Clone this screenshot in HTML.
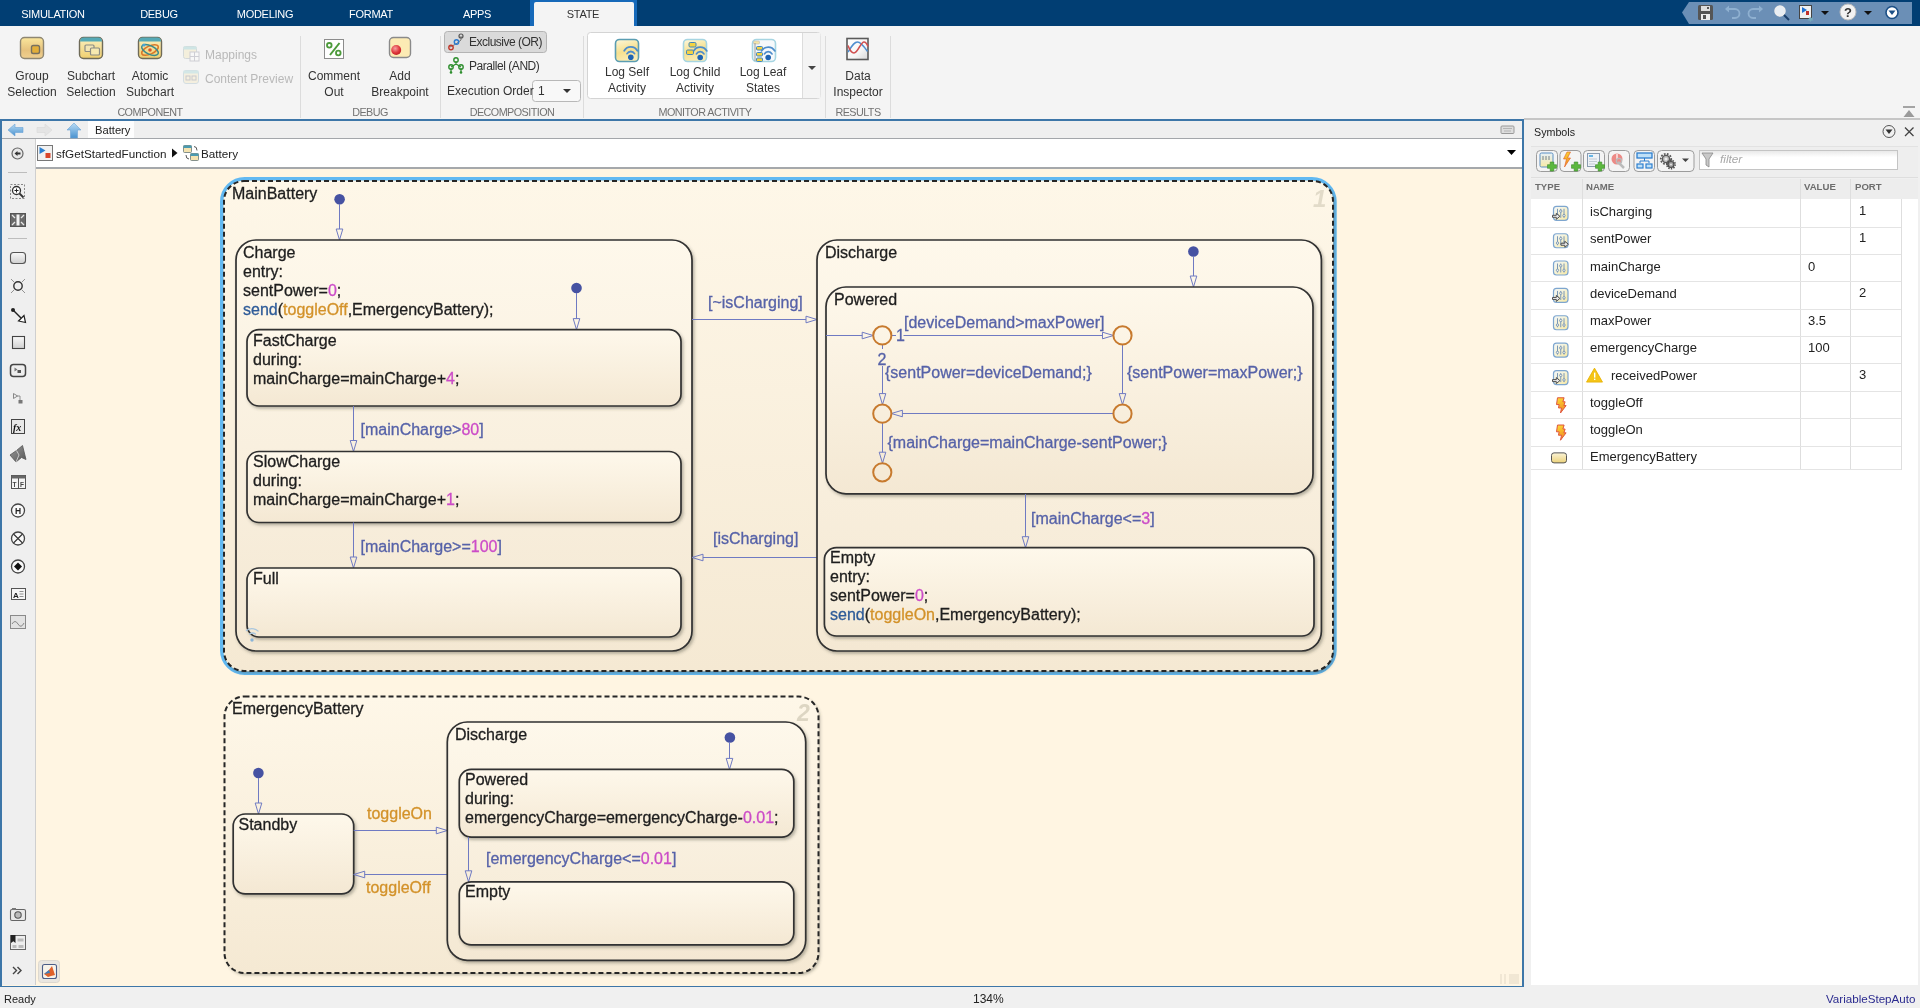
<!DOCTYPE html>
<html><head><meta charset="utf-8">
<style>
*{box-sizing:border-box;margin:0;padding:0}
html,body{width:1920px;height:1008px;overflow:hidden;background:#f0f0f0;font-family:"Liberation Sans",sans-serif;position:relative}
body{will-change:transform}
.a{position:absolute}
.t{position:absolute;white-space:nowrap;line-height:1}
#tabbar{left:0;top:0;width:1920px;height:26px;background:#013e73}
.tab{position:absolute;top:8px;color:#fff;font-size:11px;text-align:center;width:106px;letter-spacing:-0.3px}
#ribbon{left:0;top:26px;width:1920px;height:93px;background:#f4f4f4}
.rl{position:absolute;font-size:12px;color:#333;text-align:center;line-height:16px;white-space:nowrap}
.gl{position:absolute;top:106px;font-size:10.8px;color:#727272;text-align:center;white-space:nowrap;letter-spacing:-0.55px}
.sep{position:absolute;top:35px;width:1px;height:83px;background:#dcdcdc}
#frame{left:0;top:119px;width:1524px;height:869px;border:2px solid #3d76a8;background:#fff5e2}
#symp{left:1524px;top:118px;width:396px;height:869px;background:#f0f0f0;border-top:2px solid #c6c6c6}
#status{left:0;top:987px;width:1920px;height:21px;background:#f0f0f0}
</style></head><body>
<div id="tabbar" class="a">
  <div class="tab" style="left:0">SIMULATION</div>
  <div class="tab" style="left:106px">DEBUG</div>
  <div class="tab" style="left:212px">MODELING</div>
  <div class="tab" style="left:318px">FORMAT</div>
  <div class="tab" style="left:424px">APPS</div>
  <div class="a" style="left:530px;top:0px;width:107px;height:26px;background:#1669b9"></div>
  <div class="a" style="left:534px;top:2px;width:100px;height:25px;background:#f4f4f4;border-radius:2px 2px 0 0"></div>
  <div class="tab" style="left:530px;color:#333">STATE</div>
  <svg class="a" style="left:1670px;top:0" width="250" height="26" viewBox="1670 0 250 26">
    <path d="M1682 12.5 L1689 2 H1912 V24 H1689 Z" fill="#6b8fb6"/>
    <!-- save -->
    <rect x="1698" y="5" width="15" height="15" rx="1.5" fill="#555"/>
    <rect x="1701" y="6" width="9" height="5" fill="#ddd"/><rect x="1707" y="7" width="2" height="2" fill="#555"/>
    <rect x="1701" y="14" width="9" height="6" fill="#eee"/><rect x="1703" y="15" width="3" height="4" fill="#555"/>
    <!-- undo/redo -->
    <path d="M1727 9 h8 a4.5 4.5 0 0 1 0 9 h-3" fill="none" stroke="#8fb0d0" stroke-width="1.8"/><path d="M1725 9 l4 -3.5 v7 z" fill="#8fb0d0"/>
    <path d="M1761 9 h-8 a4.5 4.5 0 0 0 0 9 h3" fill="none" stroke="#8fb0d0" stroke-width="1.8"/><path d="M1763 9 l-4 -3.5 v7 z" fill="#8fb0d0"/>
    <!-- search -->
    <circle cx="1780" cy="11" r="5" fill="#e8eef4" stroke="#eee" stroke-width="1.5"/>
    <path d="M1784 15 l5 5" stroke="#1b3f6b" stroke-width="2"/>
    <!-- sim icon -->
    <rect x="1799.5" y="5.5" width="12" height="13" fill="#f0f0f0" stroke="#444"/>
    <path d="M1802 7 l5 3 l-5 3 z" fill="#1e6fd0"/><rect x="1806" y="11" width="3" height="4" fill="#c0302a"/>
    <path d="M1810 17 l1.5 1 1.5 -1 -0.5 2 1 1.5h-2l-1 1.5-1-1.5h-2l1-1.5z" fill="#7ab"/>
    <path d="M1821 11 h8 l-4 4 z" fill="#111"/>
    <!-- help -->
    <circle cx="1848" cy="12" r="8" fill="#f2f2f2" stroke="#bbb"/>
    <text x="1844" y="17" font-family="Liberation Sans" font-weight="bold" font-size="13" fill="#333">?</text>
    <path d="M1864 11 h8 l-4 4 z" fill="#111"/>
    <!-- minimize circle -->
    <circle cx="1892" cy="12.5" r="6" fill="#fff" stroke="#1b4f86" stroke-width="1.6"/>
    <path d="M1888.5 10.5 h7 l-3.5 4.5 z" fill="#1b4f86"/>
  </svg>
</div>
<div id="ribbon" class="a">
<svg class="a" style="left:0;top:0" width="1920" height="93" viewBox="0 26 1920 93">
<defs>
<linearGradient id="yg" x1="0" y1="0" x2="0" y2="1"><stop offset="0" stop-color="#fae69c"/><stop offset="0.6" stop-color="#e6c27e"/><stop offset="1" stop-color="#f0d090"/></linearGradient>
<linearGradient id="yg2" x1="0" y1="0" x2="0" y2="1"><stop offset="0" stop-color="#fbf0c0"/><stop offset="1" stop-color="#efcf6e"/></linearGradient>
<linearGradient id="lg" x1="0" y1="0" x2="0.3" y2="1"><stop offset="0" stop-color="#fdf8dc"/><stop offset="0.6" stop-color="#f6e08e"/><stop offset="1" stop-color="#f8ebb4"/></linearGradient>
</defs>
<!-- Group Selection -->
<rect x="20.5" y="37.5" width="23" height="21" rx="4" fill="url(#yg)" stroke="#8e8672" stroke-width="1.4"/>
<rect x="31.5" y="45.5" width="8" height="8" rx="1.8" fill="#e2ae3a" stroke="#777060" stroke-width="1.4"/>
<!-- Subchart Selection -->
<rect x="79.5" y="37.5" width="23" height="21" rx="4" fill="url(#yg2)" stroke="#6e6a58" stroke-width="1.4"/>
<path d="M80 41.5 Q80 37.5 84 37.5 L98 37.5 Q102 37.5 102 41.5 Z" fill="#55a9b5"/>
<rect x="85" y="45" width="9" height="6.5" rx="1" fill="#f3e6b4" stroke="#8c8c84" stroke-width="1.2"/>
<rect x="90.5" y="48" width="9" height="7" rx="1" fill="#f7e9b0" stroke="#8c8c84" stroke-width="1.2"/>
<!-- Atomic Subchart -->
<rect x="138.5" y="37.5" width="23" height="21" rx="4" fill="url(#yg2)" stroke="#6e6a58" stroke-width="1.4"/>
<path d="M139 41.5 Q139 37.5 143 37.5 L157 37.5 Q161 37.5 161 41.5 Z" fill="#55a9b5"/>
<ellipse cx="150" cy="50" rx="9" ry="4" fill="none" stroke="#d9782a" stroke-width="1.6" transform="rotate(-25 150 50)"/>
<ellipse cx="150" cy="50" rx="9" ry="4.2" fill="none" stroke="#3a8a8c" stroke-width="1.5" transform="rotate(25 150 50)"/>
<circle cx="150" cy="50" r="1.8" fill="#d9562a"/>
<circle cx="144" cy="45" r="1.6" fill="#4aa7d8"/>
<!-- Mappings (disabled) -->
<g opacity="0.35"><rect x="183.5" y="46.5" width="13" height="12" rx="2" fill="#f5e6b0" stroke="#9aa" /><rect x="183.5" y="46.5" width="13" height="3" fill="#8cc"/><rect x="190" y="52" width="9" height="9" fill="#fff" stroke="#889"/><path d="M194.5 52v9M190 56.5h9" stroke="#889"/></g>
<!-- Content preview (disabled) -->
<g opacity="0.3"><rect x="183.5" y="70.5" width="15" height="13" rx="2.5" fill="#f5e6b0" stroke="#8ab"/><rect x="183.5" y="70.5" width="15" height="3" fill="#8cc"/><rect x="186" y="76" width="4" height="4" fill="none" stroke="#667"/><rect x="192" y="76" width="4" height="4" fill="none" stroke="#667"/></g>
<!-- Comment Out -->
<rect x="324.5" y="39.5" width="19" height="19" fill="#fff" stroke="#8c8c8c" stroke-width="1"/>
<circle cx="329.3" cy="45.3" r="2.3" fill="none" stroke="#4c9a3a" stroke-width="1.8"/><circle cx="338.3" cy="53" r="2.3" fill="none" stroke="#4c9a3a" stroke-width="1.8"/><path d="M339.5 43 L330 55" stroke="#4c9a3a" stroke-width="2"/>
<!-- Add Breakpoint -->
<rect x="389.5" y="37.5" width="21" height="20" rx="4" fill="#fcebb4" stroke="#8a8a8a" stroke-width="1.4"/>
<defs><radialGradient id="rb" cx="0.4" cy="0.35" r="0.7"><stop offset="0" stop-color="#f7a0a0"/><stop offset="0.6" stop-color="#e03a3e"/><stop offset="1" stop-color="#c01c22"/></radialGradient></defs><circle cx="396.2" cy="50" r="5" fill="url(#rb)"/>
<!-- Exclusive OR button -->
<rect x="444.5" y="31.5" width="102" height="21" rx="3" fill="#dadada" stroke="#b4b4b4" stroke-width="1"/>
<path d="M450 47 L456 44 L461 40 L461 36" fill="none" stroke="#777" stroke-width="1"/>
<circle cx="451" cy="47.5" r="2.2" fill="none" stroke="#c0392b" stroke-width="1.4"/>
<circle cx="456.5" cy="42" r="2.2" fill="none" stroke="#2b7bd0" stroke-width="1.4"/>
<circle cx="461" cy="36" r="2" fill="none" stroke="#555" stroke-width="1.2"/>
<!-- Parallel AND -->
<path d="M456 61 V65 M451 67 L456 64 L461 67 M451 68 V72 M461 68 V72" fill="none" stroke="#2f8f2f" stroke-width="1.2"/>
<circle cx="456" cy="60" r="2.2" fill="none" stroke="#2f8f2f" stroke-width="1.4"/>
<circle cx="451" cy="67" r="2.2" fill="none" stroke="#2f8f2f" stroke-width="1.4"/>
<circle cx="461" cy="67" r="2.2" fill="none" stroke="#2f8f2f" stroke-width="1.4"/>
<circle cx="451" cy="72.5" r="1.3" fill="#2f8f2f"/><circle cx="461" cy="72.5" r="1.3" fill="#2f8f2f"/>
<!-- Exec order dropdown -->
<rect x="532.5" y="80.5" width="48" height="21" rx="3" fill="#f8f8f8" stroke="#b8b8b8" stroke-width="1"/>
<path d="M563 89 h8 l-4 4 z" fill="#333"/>
<!-- gallery -->
<rect x="587.5" y="32.5" width="233" height="66" rx="3" fill="#fff" stroke="#d4d4d4" stroke-width="1"/>
<rect x="802" y="33" width="18.5" height="65" fill="#f4f4f4"/>
<line x1="802.5" y1="33" x2="802.5" y2="98" stroke="#dcdcdc"/>
<path d="M808 66 h8 l-4 4 z" fill="#444"/>
<!-- Log Self -->
<rect x="615.5" y="39.5" width="23" height="22" rx="4" fill="url(#lg)" stroke="#5a9db2" stroke-width="1.6"/>
<path d="M624.22 50.70 A7.6 7.6 0 0 1 637.38 50.70 M627.08 53.65 A4.3 4.3 0 0 1 634.52 53.65" fill="none" stroke="#4d8ccb" stroke-width="1.8" stroke-linecap="round"/><circle cx="630.8" cy="57.3" r="2.8" fill="#1f64b3"/>
<!-- Log Child -->
<rect x="683.5" y="39.5" width="23" height="22" rx="4" fill="url(#lg)" stroke="#a6d5e2" stroke-width="1.6"/>
<rect x="689" y="42.5" width="7" height="4.5" rx="1.2" fill="#f4d342" stroke="#3f86c0" stroke-width="1"/>
<rect x="686.5" y="50" width="7" height="4.5" rx="1.2" fill="#f4d342" stroke="#3f86c0" stroke-width="1"/>
<path d="M693.62 50.90 A7.6 7.6 0 0 1 706.78 50.90 M696.48 53.85 A4.3 4.3 0 0 1 703.92 53.85" fill="none" stroke="#4d8ccb" stroke-width="1.8" stroke-linecap="round"/><circle cx="700.2" cy="57.5" r="2.8" fill="#1f64b3"/>
<!-- Log Leaf -->
<rect x="752.5" y="39.5" width="23" height="22" rx="4" fill="#f6f9fb" stroke="#a6d5e2" stroke-width="1.6"/>
<rect x="753.5" y="41" width="6" height="3" rx="1" fill="#f5e6a8" stroke="#bbb" stroke-width="0.6"/>
<path d="M755 43 V61" stroke="#999" stroke-width="1"/>
<rect x="756.5" y="46.5" width="6" height="3.5" rx="1" fill="#f4d342" stroke="#3f86c0" stroke-width="1"/>
<rect x="756.5" y="52.5" width="6" height="3.5" rx="1" fill="#f4d342" stroke="#3f86c0" stroke-width="1"/>
<rect x="756.5" y="58" width="6" height="3.5" rx="1" fill="#f4d342" stroke="#3f86c0" stroke-width="1"/>
<path d="M761.62 50.90 A7.6 7.6 0 0 1 774.78 50.90 M764.48 53.85 A4.3 4.3 0 0 1 771.92 53.85" fill="none" stroke="#4d8ccb" stroke-width="1.8" stroke-linecap="round"/><circle cx="768.2" cy="57.5" r="2.8" fill="#1f64b3"/>
<!-- Data inspector -->
<defs><linearGradient id="di" x1="0" y1="0" x2="1" y2="1"><stop offset="0" stop-color="#ffffff"/><stop offset="0.6" stop-color="#f6f6f6"/><stop offset="1" stop-color="#d8d8d8"/></linearGradient></defs>
<rect x="847" y="38.5" width="21" height="21" fill="url(#di)" stroke="#5a5a5a" stroke-width="1.6"/>
<path d="M848 52 C852 46 854 42 857.5 42 C861 42 864 46.5 867.5 51.5" fill="none" stroke="#4f8fd0" stroke-width="1.6"/>
<path d="M848 45.5 C850 51 851.5 53 854 53 C858 53 860.5 42 864 42 C866 42 867 44 868 46.5" fill="none" stroke="#d05050" stroke-width="1.6"/>
<!-- separators -->
<line x1="300.5" y1="36" x2="300.5" y2="118" stroke="#dcdcdc"/>
<line x1="440.5" y1="36" x2="440.5" y2="118" stroke="#dcdcdc"/>
<line x1="583.5" y1="36" x2="583.5" y2="118" stroke="#dcdcdc"/>
<line x1="825.5" y1="36" x2="825.5" y2="118" stroke="#dcdcdc"/>
<line x1="890.5" y1="36" x2="890.5" y2="118" stroke="#dcdcdc"/>
<!-- collapse arrow right -->
<path d="M1903 107 h12" stroke="#8a8a8a" stroke-width="1.5"/><path d="M1903.5 117 l5.5 -7 l5.5 7 z" fill="#9a9a9a"/>
</svg>
<div class="rl" style="left:2px;top:42px;width:60px">Group<br>Selection</div>
<div class="rl" style="left:61px;top:42px;width:60px">Subchart<br>Selection</div>
<div class="rl" style="left:120px;top:42px;width:60px">Atomic<br>Subchart</div>
<div class="t" style="left:205px;top:23px;font-size:12px;color:#b9b9b9">Mappings</div>
<div class="t" style="left:205px;top:47px;font-size:12px;color:#b9b9b9">Content Preview</div>
<div class="rl" style="left:304px;top:42px;width:60px">Comment<br>Out</div>
<div class="rl" style="left:365px;top:42px;width:70px">Add<br>Breakpoint</div>
<div class="t" style="left:469px;top:10px;font-size:12px;letter-spacing:-0.5px;color:#333">Exclusive (OR)</div>
<div class="t" style="left:469px;top:34px;font-size:12px;letter-spacing:-0.45px;color:#333">Parallel (AND)</div>
<div class="t" style="left:447px;top:59px;font-size:12px;color:#333">Execution Order</div>
<div class="t" style="left:538px;top:59px;font-size:12px;color:#333">1</div>
<div class="rl" style="left:597px;top:38px;width:60px">Log Self<br>Activity</div>
<div class="rl" style="left:665px;top:38px;width:60px">Log Child<br>Activity</div>
<div class="rl" style="left:733px;top:38px;width:60px">Log Leaf<br>States</div>
<div class="rl" style="left:827px;top:42px;width:62px">Data<br>Inspector</div>
<div class="gl" style="left:100px;top:80px;width:100px">COMPONENT</div>
<div class="gl" style="left:320px;top:80px;width:100px">DEBUG</div>
<div class="gl" style="left:452px;top:80px;width:120px">DECOMPOSITION</div>
<div class="gl" style="left:635px;top:80px;width:140px">MONITOR ACTIVITY</div>
<div class="gl" style="left:827px;top:80px;width:62px">RESULTS</div>
</div>
<div id="frame" class="a"></div>
<div class="a" style="left:2px;top:121px;width:1520px;height:17px;background:#efefef"></div>
<div class="a" style="left:2px;top:138px;width:1520px;height:1px;background:#a3a6aa"></div>
<div class="a" style="left:88px;top:121px;width:46px;height:17px;background:#fdfdfd"></div>
<div class="t" style="left:95px;top:125px;font-size:11.2px;color:#222">Battery</div>
<div class="a" style="left:2px;top:139px;width:33px;height:846px;background:#efefef"></div>
<div class="a" style="left:35px;top:139px;width:1px;height:846px;background:#cfcfcf"></div>
<div class="a" style="left:36px;top:139px;width:1486px;height:29px;background:#fff"></div>
<div class="a" style="left:36px;top:167px;width:1486px;height:2px;background:#a5a8ab"></div>
<div class="t" style="left:56px;top:148px;font-size:11.7px;color:#222">sfGetStartedFunction</div>
<div class="t" style="left:201px;top:148px;font-size:11.7px;color:#222">Battery</div>
<svg class="a" style="left:0;top:119px" width="1524" height="870" viewBox="0 119 1524 870">
<defs>
<linearGradient id="ba" x1="0" y1="0" x2="0" y2="1"><stop offset="0" stop-color="#b9dcf5"/><stop offset="1" stop-color="#4a92cf"/></linearGradient>
<linearGradient id="sg" x1="0" y1="0" x2="0" y2="1"><stop offset="0" stop-color="#fafafa"/><stop offset="1" stop-color="#cfcfcf"/></linearGradient>
</defs>
<!-- nav arrows -->
<path d="M8 130 L15 124 V127.5 H23 V132.5 H15 V136 Z" fill="url(#ba)" stroke="#6aa3d6" stroke-width="0.6"/>
<path d="M52 130 L45 124 V127.5 H37 V132.5 H45 V136 Z" fill="#e4e4e4" stroke="#d8d8d8" stroke-width="0.6"/>
<path d="M74 123 L81 130 H77.5 V138 H70.5 V130 H67 Z" fill="url(#ba)" stroke="#6aa3d6" stroke-width="0.6"/>
<!-- keyboard icon -->
<rect x="1501" y="126" width="13" height="7.5" rx="1" fill="#ddd" stroke="#999" stroke-width="1"/>
<path d="M1503 128.5 h9 M1504 131 h7" stroke="#aaa" stroke-width="0.8"/>
<!-- breadcrumb icons -->
<rect x="37.5" y="145.5" width="15" height="15" fill="#f1f1f1" stroke="#777" stroke-width="1"/>
<path d="M39.5 147 l6 3.5 l-6 3.5 z" fill="#2a7fd0"/>
<rect x="45.5" y="153" width="5" height="5" fill="#d9452b"/>
<path d="M172 148.5 l5.5 4.5 l-5.5 4.5 z" fill="#111"/>
<rect x="183.5" y="145.5" width="8" height="7" rx="1" fill="#f4e3b0" stroke="#677" stroke-width="0.8"/><rect x="183.5" y="145.5" width="8" height="2.5" fill="#4a9ab0"/>
<rect x="190.5" y="153.5" width="8" height="7" rx="1" fill="#f4e3b0" stroke="#677" stroke-width="0.8"/><rect x="190.5" y="153.5" width="8" height="2.5" fill="#4a9ab0"/>
<path d="M194 146.5 q3 0 3 4 M186 155 q0 4 3 4" fill="none" stroke="#444" stroke-width="0.9"/>
<path d="M1507 150 h9 l-4.5 5 z" fill="#000"/>
<!-- left toolbar -->
<circle cx="17.5" cy="153.5" r="5.5" fill="#e8e8e8" stroke="#666" stroke-width="1.2"/>
<path d="M14.5 153.5 l3 -2.5 v1.5 h3 v2 h-3 v1.5 z" fill="#333"/>
<line x1="8" y1="172.5" x2="27" y2="172.5" stroke="#bdbdbd"/>
<rect x="10.5" y="184.5" width="14" height="14" fill="none" stroke="#888" stroke-width="1" stroke-dasharray="2 1.5"/>
<circle cx="16.5" cy="190.5" r="4" fill="#fff" stroke="#333" stroke-width="1.3"/>
<path d="M14.5 190.5 h4 M16.5 188.5 v4" stroke="#222" stroke-width="1"/>
<path d="M19.5 193.5 l4 4" stroke="#333" stroke-width="1.8"/>
<rect x="10.5" y="213.5" width="15" height="13" fill="#6a6a6a" stroke="#555" stroke-width="1"/>
<rect x="16.5" y="214.5" width="3" height="11" fill="#f4f4f4"/>
<path d="M12 215 l3 3 M24 215 l-3 3 M12 225 l3 -3 M24 225 l-3 -3" stroke="#e8e8e8" stroke-width="1.3"/>
<line x1="8" y1="238.5" x2="27" y2="238.5" stroke="#bdbdbd"/>
<rect x="10.5" y="252.5" width="15" height="11" rx="3" fill="url(#sg)" stroke="#555" stroke-width="1.1"/>
<circle cx="18" cy="286" r="4.2" fill="none" stroke="#333" stroke-width="1.4"/>
<path d="M11 279 l3 3 M25 279 l-3 3 M11 293 l3 -3 M25 293 l-3 -3" stroke="#888" stroke-width="0.9"/>
<circle cx="13" cy="310" r="2" fill="#222"/>
<path d="M13 310 l8 8" stroke="#222" stroke-width="1.5"/>
<path d="M25.5 322.5 l-7 -1.5 l5.5 -5.5 z" fill="#fff" stroke="#222" stroke-width="1.2"/>
<rect x="12.5" y="336.5" width="12" height="12" fill="url(#sg)" stroke="#444" stroke-width="1.1"/>
<rect x="10.5" y="364.5" width="15" height="12" rx="3" fill="#eee" stroke="#444" stroke-width="1.5"/>
<path d="M14.5 367.5 l3 2 l-3 2 z" fill="#777"/><rect x="17.5" y="370" width="3.5" height="3" fill="#555"/>
<path d="M13.5 393.5 l4 2.5 l-4 2.5 z" fill="none" stroke="#888" stroke-width="1"/>
<path d="M17 396 h3 v4" fill="none" stroke="#888" stroke-width="0.9"/><rect x="18.5" y="400" width="4" height="3.5" fill="#777"/>
<rect x="11.5" y="419.5" width="13" height="14" fill="#e8e8e8" stroke="#444" stroke-width="1"/>
<text x="13" y="431" font-family="Liberation Serif" font-style="italic" font-weight="bold" font-size="10" fill="#111">fx</text>
<defs><linearGradient id="ml" x1="0" y1="0" x2="1" y2="1"><stop offset="0" stop-color="#9a9a9a"/><stop offset="1" stop-color="#555"/></linearGradient></defs><path d="M10 455 L16.5 450.5 L22.5 445.5 L26 459.5 L21.5 457.5 L16 462 Z" fill="url(#ml)" stroke="#555" stroke-width="0.8" stroke-linejoin="round"/><path d="M16.5 450.5 L19 455 L16 462" fill="none" stroke="#ddd" stroke-width="0.8"/>
<rect x="11.5" y="475.5" width="14" height="13" fill="#f4f4f4" stroke="#555" stroke-width="1"/>
<rect x="11.5" y="475.5" width="14" height="3" fill="#666"/>
<line x1="18.5" y1="478" x2="18.5" y2="488.5" stroke="#555"/>
<text x="12.6" y="486.5" font-family="Liberation Sans" font-size="6.5" font-weight="bold" fill="#444">T</text><text x="20" y="486.5" font-family="Liberation Sans" font-size="6.5" font-weight="bold" fill="#444">F</text>
<circle cx="18" cy="510.5" r="6.5" fill="#fafafa" stroke="#444" stroke-width="1.3"/>
<text x="15" y="514" font-family="Liberation Sans" font-weight="bold" font-size="8.5" fill="#222">H</text>
<circle cx="18" cy="538.5" r="6.5" fill="#fafafa" stroke="#444" stroke-width="1.3"/>
<path d="M13.5 534 l9 9 M22.5 534 l-9 9" stroke="#333" stroke-width="1.1"/>
<circle cx="18" cy="566.5" r="6.5" fill="#fafafa" stroke="#444" stroke-width="1.3"/>
<path d="M18 562.5 l4 4 l-4 4 l-4 -4 z" fill="#111"/>
<rect x="11.5" y="588.5" width="14" height="11" fill="#f6f6f6" stroke="#555" stroke-width="1"/>
<text x="13" y="597.5" font-family="Liberation Sans" font-weight="bold" font-size="8" fill="#222">A</text>
<path d="M19.5 591.5 h4 M19.5 594 h4 M19.5 596.5 h4" stroke="#777" stroke-width="0.8"/>
<rect x="10.5" y="615.5" width="15" height="13" fill="#e2e2e2" stroke="#8a8a8a" stroke-width="1"/>
<path d="M12 624 q3 -5 6 0 t6 -1" fill="none" stroke="#888" stroke-width="1"/>
<!-- bottom icons -->
<rect x="10.5" y="909.5" width="15" height="11" rx="1.5" fill="#e9e9e9" stroke="#666" stroke-width="1.1"/>
<rect x="12" y="908" width="4" height="2" fill="#777"/>
<circle cx="18" cy="915" r="3.2" fill="#bbb" stroke="#555" stroke-width="1.1"/>
<rect x="10.5" y="935.5" width="15" height="14" fill="#eee" stroke="#666" stroke-width="1"/>
<path d="M11 935 h4.5 v8 l-2.2 -1.8 l-2.3 1.8 z" fill="#222"/>
<rect x="17.5" y="938.5" width="6" height="3" fill="#bbb"/><rect x="12.5" y="945" width="4" height="3" fill="#bbb"/><rect x="18.5" y="945" width="5" height="3" fill="#bbb"/>
<path d="M13 967 l3.5 3.5 l-3.5 3.5 M17.5 967 l3.5 3.5 l-3.5 3.5" fill="none" stroke="#444" stroke-width="1.4"/>
<!-- matlab icon button on canvas -->
<rect x="38.5" y="960.5" width="21" height="22" rx="3" fill="#e9e6e0" stroke="#dcd8d0"/>
<rect x="42.5" y="964.5" width="14" height="14" rx="2" fill="#f7f3ea" stroke="#4b5d87" stroke-width="1.1"/>
<path d="M44 974 L49 970 L52 966 L55 975 L51 976 L48 977 Z" fill="#e0622a"/>
<path d="M44 974 L49 970 L50 973 Z" fill="#3a7fc0"/>
<!-- bottom-right grip -->
<rect x="1500" y="974" width="2" height="10" fill="#f1e7d4"/><rect x="1504" y="974" width="2" height="10" fill="#f1e7d4"/><rect x="1509" y="974" width="10" height="10" fill="#f1e7d4"/>
</svg>
<svg class="a" style="left:0;top:0" width="1920" height="1008" viewBox="0 0 1920 1008">
<defs>
<linearGradient id="g" x1="0" y1="0" x2="0" y2="1"><stop offset="0" stop-color="#fef8eb"/><stop offset="1" stop-color="#f4e8d3"/></linearGradient>
<linearGradient id="gp" x1="0" y1="0" x2="0" y2="1"><stop offset="0" stop-color="#fef7e8"/><stop offset="1" stop-color="#f5e9d3"/></linearGradient>
<filter id="sh" x="-5%" y="-5%" width="110%" height="115%"><feDropShadow dx="1.6" dy="2" stdDeviation="1.7" flood-color="#4a4438" flood-opacity="0.38"/></filter>
<clipPath id="cc"><rect x="36" y="169" width="1486" height="816"/></clipPath>
</defs>
<g clip-path="url(#cc)" font-family="Liberation Sans, sans-serif" font-size="16" stroke-width="0.3">
<rect x="221.7" y="178.7" width="1113.3" height="494.6" rx="23" fill="none" stroke="#62b9f2" stroke-width="3.4"/>
<rect x="224" y="181" width="1109" height="490" rx="20" fill="url(#gp)" filter="url(#sh)" stroke="none"/>
<rect x="224" y="181" width="1109" height="490" rx="20" fill="none" stroke="#262626" stroke-width="2" stroke-dasharray="5 3"/>
<text x="232" y="199" fill="#1e1e1e" stroke="#1e1e1e" font-size="16">MainBattery</text>
<text x="1313" y="207" fill="#e2dbc9" font-size="24" font-weight="bold" font-style="italic">1</text>
<circle cx="339.6" cy="199.3" r="5.3" fill="#4652a2"/>
<line x1="339.5" y1="204" x2="339.5" y2="229" stroke="#6f7ac2" stroke-width="1"/>
<polygon points="339.5,240.0 336.2,229.0 342.8,229.0" fill="none" stroke="#6f7ac2" stroke-width="1" stroke-linejoin="miter"/>
<rect x="236" y="240" width="456" height="411" rx="20" fill="url(#g)" filter="url(#sh)" stroke="#303030" stroke-width="1.7"/>
<text x="243" y="258" fill="#1e1e1e" stroke="#1e1e1e" font-size="16">Charge</text>
<text x="243" y="277" fill="#1e1e1e" stroke="#1e1e1e" font-size="16">entry:</text>
<text x="243" y="296" font-size="16"><tspan fill="#1e1e1e" stroke="#1e1e1e">sentPower=</tspan><tspan fill="#cc4cc8" stroke="#cc4cc8">0</tspan><tspan fill="#1e1e1e" stroke="#1e1e1e">;</tspan></text>
<text x="243" y="315" font-size="16"><tspan fill="#2e5b98" stroke="#2e5b98">send</tspan><tspan fill="#1e1e1e" stroke="#1e1e1e">(</tspan><tspan fill="#d3922a" stroke="#d3922a">toggleOff</tspan><tspan fill="#1e1e1e" stroke="#1e1e1e">,EmergencyBattery);</tspan></text>
<circle cx="576.5" cy="288" r="5.3" fill="#4652a2"/>
<line x1="576.5" y1="293" x2="576.5" y2="318.6" stroke="#6f7ac2" stroke-width="1"/>
<polygon points="576.5,329.6 573.2,318.6 579.8,318.6" fill="none" stroke="#6f7ac2" stroke-width="1" stroke-linejoin="miter"/>
<rect x="247" y="329.6" width="434" height="76.39999999999998" rx="12" fill="url(#g)" filter="url(#sh)" stroke="#303030" stroke-width="1.7"/>
<text x="253" y="346" fill="#1e1e1e" stroke="#1e1e1e" font-size="16">FastCharge</text>
<text x="253" y="365" fill="#1e1e1e" stroke="#1e1e1e" font-size="16">during:</text>
<text x="253" y="384" font-size="16"><tspan fill="#1e1e1e" stroke="#1e1e1e">mainCharge=mainCharge+</tspan><tspan fill="#cc4cc8" stroke="#cc4cc8">4</tspan><tspan fill="#1e1e1e" stroke="#1e1e1e">;</tspan></text>
<line x1="353.5" y1="406" x2="353.5" y2="440.5" stroke="#6f7ac2" stroke-width="1"/>
<polygon points="353.5,451.5 350.2,440.5 356.8,440.5" fill="none" stroke="#6f7ac2" stroke-width="1" stroke-linejoin="miter"/>
<text x="360.5" y="435" font-size="16"><tspan fill="#5662a8" stroke="#5662a8">[mainCharge&gt;</tspan><tspan fill="#cc4cc8" stroke="#cc4cc8">80</tspan><tspan fill="#5662a8" stroke="#5662a8">]</tspan></text>
<rect x="247" y="451.5" width="434" height="71.0" rx="12" fill="url(#g)" filter="url(#sh)" stroke="#303030" stroke-width="1.7"/>
<text x="253" y="467" fill="#1e1e1e" stroke="#1e1e1e" font-size="16">SlowCharge</text>
<text x="253" y="486" fill="#1e1e1e" stroke="#1e1e1e" font-size="16">during:</text>
<text x="253" y="505" font-size="16"><tspan fill="#1e1e1e" stroke="#1e1e1e">mainCharge=mainCharge+</tspan><tspan fill="#cc4cc8" stroke="#cc4cc8">1</tspan><tspan fill="#1e1e1e" stroke="#1e1e1e">;</tspan></text>
<line x1="353.5" y1="522.5" x2="353.5" y2="557" stroke="#6f7ac2" stroke-width="1"/>
<polygon points="353.5,568.0 350.2,557.0 356.8,557.0" fill="none" stroke="#6f7ac2" stroke-width="1" stroke-linejoin="miter"/>
<text x="360.5" y="552" font-size="16"><tspan fill="#5662a8" stroke="#5662a8">[mainCharge&gt;=</tspan><tspan fill="#cc4cc8" stroke="#cc4cc8">100</tspan><tspan fill="#5662a8" stroke="#5662a8">]</tspan></text>
<rect x="247" y="568" width="434" height="69" rx="12" fill="url(#g)" filter="url(#sh)" stroke="#303030" stroke-width="1.7"/>
<text x="253" y="584" fill="#1e1e1e" stroke="#1e1e1e" font-size="16">Full</text>
<path d="M246.5 630.5 Q252 626.5 258 631 M249.5 634 Q252.5 632 255.5 634" fill="none" stroke="#a9c6de" stroke-width="1.3" stroke-linecap="round"/><circle cx="252" cy="640" r="1.7" fill="#8ab4d8"/>
<line x1="692" y1="319.5" x2="806" y2="319.5" stroke="#6f7ac2" stroke-width="1"/>
<polygon points="817.0,319.5 806.0,316.2 806.0,322.8" fill="none" stroke="#6f7ac2" stroke-width="1" stroke-linejoin="miter"/>
<text x="708" y="308" fill="#5662a8" stroke="#5662a8" font-size="16">[~isCharging]</text>
<line x1="817" y1="557.5" x2="703" y2="557.5" stroke="#6f7ac2" stroke-width="1"/>
<polygon points="692.0,557.5 703.0,554.2 703.0,560.8" fill="none" stroke="#6f7ac2" stroke-width="1" stroke-linejoin="miter"/>
<text x="713" y="544" fill="#5662a8" stroke="#5662a8" font-size="16">[isCharging]</text>
<rect x="817" y="240" width="504.4000000000001" height="411" rx="20" fill="url(#g)" filter="url(#sh)" stroke="#303030" stroke-width="1.7"/>
<text x="825" y="258" fill="#1e1e1e" stroke="#1e1e1e" font-size="16">Discharge</text>
<circle cx="1193.4" cy="251.5" r="5.3" fill="#4652a2"/>
<line x1="1193.5" y1="256" x2="1193.5" y2="276" stroke="#6f7ac2" stroke-width="1"/>
<polygon points="1193.5,287.0 1190.2,276.0 1196.8,276.0" fill="none" stroke="#6f7ac2" stroke-width="1" stroke-linejoin="miter"/>
<rect x="826" y="287" width="487" height="206.8" rx="20" fill="url(#g)" filter="url(#sh)" stroke="#303030" stroke-width="1.7"/>
<text x="834" y="305" fill="#1e1e1e" stroke="#1e1e1e" font-size="16">Powered</text>
<line x1="826" y1="335.5" x2="862.2" y2="335.5" stroke="#6f7ac2" stroke-width="1"/>
<polygon points="873.2,335.5 862.2,332.2 862.2,338.8" fill="none" stroke="#6f7ac2" stroke-width="1" stroke-linejoin="miter"/>
<line x1="903.5" y1="335.5" x2="1102.5" y2="335.5" stroke="#6f7ac2" stroke-width="1"/>
<polygon points="1113.5,335.5 1102.5,332.2 1102.5,338.8" fill="none" stroke="#6f7ac2" stroke-width="1" stroke-linejoin="miter"/>
<line x1="891.5" y1="335.5" x2="896" y2="335.5" stroke="#6f7ac2" stroke-width="1"/>
<line x1="1122.5" y1="344.5" x2="1122.5" y2="393.6" stroke="#6f7ac2" stroke-width="1"/>
<polygon points="1122.5,404.6 1119.2,393.6 1125.8,393.6" fill="none" stroke="#6f7ac2" stroke-width="1" stroke-linejoin="miter"/>
<line x1="1113.4" y1="413.5" x2="902.4" y2="413.5" stroke="#6f7ac2" stroke-width="1"/>
<polygon points="891.4,413.5 902.4,410.2 902.4,416.8" fill="none" stroke="#6f7ac2" stroke-width="1" stroke-linejoin="miter"/>
<line x1="882.5" y1="344" x2="882.5" y2="349" stroke="#6f7ac2" stroke-width="1"/>
<line x1="882.5" y1="366" x2="882.5" y2="393.6" stroke="#6f7ac2" stroke-width="1"/>
<polygon points="882.5,404.6 879.2,393.6 885.8,393.6" fill="none" stroke="#6f7ac2" stroke-width="1" stroke-linejoin="miter"/>
<line x1="882.5" y1="422.8" x2="882.5" y2="452.2" stroke="#6f7ac2" stroke-width="1"/>
<polygon points="882.5,463.2 879.2,452.2 885.8,452.2" fill="none" stroke="#6f7ac2" stroke-width="1" stroke-linejoin="miter"/>
<circle cx="882.3" cy="335.4" r="9.1" fill="none" stroke="#c77a2e" stroke-width="2"/>
<circle cx="1122.5" cy="335.4" r="9.1" fill="none" stroke="#c77a2e" stroke-width="2"/>
<circle cx="882.3" cy="413.7" r="9.1" fill="none" stroke="#c77a2e" stroke-width="2"/>
<circle cx="1122.5" cy="413.7" r="9.1" fill="none" stroke="#c77a2e" stroke-width="2"/>
<circle cx="882.3" cy="472.3" r="9.1" fill="none" stroke="#c77a2e" stroke-width="2"/>
<text x="896" y="341" fill="#5662a8" stroke="#5662a8" font-size="16">1</text>
<text x="877.5" y="364.5" fill="#5662a8" stroke="#5662a8" font-size="16">2</text>
<text x="904" y="328" fill="#5662a8" stroke="#5662a8" font-size="16">[deviceDemand&gt;maxPower]</text>
<text x="885" y="378" fill="#5662a8" stroke="#5662a8" font-size="16">{sentPower=deviceDemand;}</text>
<text x="1127" y="378" fill="#5662a8" stroke="#5662a8" font-size="16">{sentPower=maxPower;}</text>
<text x="887.5" y="448" fill="#5662a8" stroke="#5662a8" font-size="16">{mainCharge=mainCharge-sentPower;}</text>
<line x1="1025.5" y1="494" x2="1025.5" y2="536.7" stroke="#6f7ac2" stroke-width="1"/>
<polygon points="1025.5,547.7 1022.2,536.7 1028.8,536.7" fill="none" stroke="#6f7ac2" stroke-width="1" stroke-linejoin="miter"/>
<text x="1031" y="524" font-size="16"><tspan fill="#5662a8" stroke="#5662a8">[mainCharge&lt;=</tspan><tspan fill="#cc4cc8" stroke="#cc4cc8">3</tspan><tspan fill="#5662a8" stroke="#5662a8">]</tspan></text>
<rect x="824.4" y="547.7" width="489.6" height="88.29999999999995" rx="12" fill="url(#g)" filter="url(#sh)" stroke="#303030" stroke-width="1.7"/>
<text x="830" y="563" fill="#1e1e1e" stroke="#1e1e1e" font-size="16">Empty</text>
<text x="830" y="582" fill="#1e1e1e" stroke="#1e1e1e" font-size="16">entry:</text>
<text x="830" y="601" font-size="16"><tspan fill="#1e1e1e" stroke="#1e1e1e">sentPower=</tspan><tspan fill="#cc4cc8" stroke="#cc4cc8">0</tspan><tspan fill="#1e1e1e" stroke="#1e1e1e">;</tspan></text>
<text x="830" y="620" font-size="16"><tspan fill="#2e5b98" stroke="#2e5b98">send</tspan><tspan fill="#1e1e1e" stroke="#1e1e1e">(</tspan><tspan fill="#d3922a" stroke="#d3922a">toggleOn</tspan><tspan fill="#1e1e1e" stroke="#1e1e1e">,EmergencyBattery);</tspan></text>
<rect x="224.5" y="696.5" width="594.0" height="276.5" rx="20" fill="url(#gp)" filter="url(#sh)" stroke="none"/>
<rect x="224.5" y="696.5" width="594.0" height="276.5" rx="20" fill="none" stroke="#262626" stroke-width="2" stroke-dasharray="5 3"/>
<text x="232" y="714" fill="#1e1e1e" stroke="#1e1e1e" font-size="16">EmergencyBattery</text>
<text x="797" y="721" fill="#ddd6c3" font-size="23" font-weight="bold" font-style="italic">2</text>
<circle cx="258.4" cy="773" r="5.3" fill="#4652a2"/>
<line x1="258.5" y1="778" x2="258.5" y2="803" stroke="#6f7ac2" stroke-width="1"/>
<polygon points="258.5,814.0 255.2,803.0 261.8,803.0" fill="none" stroke="#6f7ac2" stroke-width="1" stroke-linejoin="miter"/>
<rect x="233.2" y="814" width="120.5" height="79.79999999999995" rx="12" fill="url(#g)" filter="url(#sh)" stroke="#303030" stroke-width="1.7"/>
<text x="238.5" y="830" fill="#1e1e1e" stroke="#1e1e1e" font-size="16">Standby</text>
<line x1="353.7" y1="830.5" x2="436.3" y2="830.5" stroke="#6f7ac2" stroke-width="1"/>
<polygon points="447.3,830.5 436.3,827.2 436.3,833.8" fill="none" stroke="#6f7ac2" stroke-width="1" stroke-linejoin="miter"/>
<text x="367" y="819" fill="#d3922a" stroke="#d3922a" font-size="16">toggleOn</text>
<line x1="447.3" y1="874.5" x2="364.7" y2="874.5" stroke="#6f7ac2" stroke-width="1"/>
<polygon points="353.7,874.5 364.7,871.2 364.7,877.8" fill="none" stroke="#6f7ac2" stroke-width="1" stroke-linejoin="miter"/>
<text x="366" y="893" fill="#d3922a" stroke="#d3922a" font-size="16">toggleOff</text>
<rect x="447.3" y="722" width="358.40000000000003" height="238.29999999999995" rx="20" fill="url(#g)" filter="url(#sh)" stroke="#303030" stroke-width="1.7"/>
<text x="455" y="740" fill="#1e1e1e" stroke="#1e1e1e" font-size="16">Discharge</text>
<circle cx="729.9" cy="737.5" r="5.3" fill="#4652a2"/>
<line x1="729.5" y1="742" x2="729.5" y2="758.4" stroke="#6f7ac2" stroke-width="1"/>
<polygon points="729.5,769.4 726.2,758.4 732.8,758.4" fill="none" stroke="#6f7ac2" stroke-width="1" stroke-linejoin="miter"/>
<rect x="459.3" y="769.4" width="334.49999999999994" height="67.80000000000007" rx="12" fill="url(#g)" filter="url(#sh)" stroke="#303030" stroke-width="1.7"/>
<text x="465" y="785" fill="#1e1e1e" stroke="#1e1e1e" font-size="16">Powered</text>
<text x="465" y="804" fill="#1e1e1e" stroke="#1e1e1e" font-size="16">during:</text>
<text x="465" y="823" font-size="16"><tspan fill="#1e1e1e" stroke="#1e1e1e">emergencyCharge=emergencyCharge-</tspan><tspan fill="#cc4cc8" stroke="#cc4cc8">0.01</tspan><tspan fill="#1e1e1e" stroke="#1e1e1e">;</tspan></text>
<line x1="468.5" y1="837.2" x2="468.5" y2="870.8" stroke="#6f7ac2" stroke-width="1"/>
<polygon points="468.5,881.8 465.2,870.8 471.8,870.8" fill="none" stroke="#6f7ac2" stroke-width="1" stroke-linejoin="miter"/>
<text x="486" y="864" font-size="16"><tspan fill="#5662a8" stroke="#5662a8">[emergencyCharge&lt;=</tspan><tspan fill="#cc4cc8" stroke="#cc4cc8">0.01</tspan><tspan fill="#5662a8" stroke="#5662a8">]</tspan></text>
<rect x="459.3" y="881.8" width="334.49999999999994" height="63.0" rx="12" fill="url(#g)" filter="url(#sh)" stroke="#303030" stroke-width="1.7"/>
<text x="465" y="897" fill="#1e1e1e" stroke="#1e1e1e" font-size="16">Empty</text>
</g></svg>
<div id="symp" class="a"></div>
<div class="t" style="left:1534px;top:127px;font-size:10.7px;color:#222">Symbols</div>
<div class="a" style="left:1531px;top:146px;width:387px;height:32px;background:#eeeeee;border-top:1px solid #e2e2e2;border-bottom:1px solid #dedede"></div>
<div class="a" style="left:1699px;top:150px;width:199px;height:20px;background:linear-gradient(#e9e9e9,#fff 35%);border:1px solid #c4c4c4"></div>
<div class="t" style="left:1720px;top:154px;font-size:11.8px;color:#a8a8a8;font-style:italic">filter</div>
<div class="a" style="left:1531px;top:179px;width:387px;height:806px;background:#fff"></div>
<div class="a" style="left:1531px;top:179px;width:387px;height:20px;background:#ededed"></div>
<div class="t" style="left:1535px;top:181.5px;font-size:9.6px;color:#6d6d6d;font-weight:bold">TYPE</div>
<div class="t" style="left:1586px;top:181.5px;font-size:9.6px;color:#6d6d6d;font-weight:bold">NAME</div>
<div class="t" style="left:1804px;top:181.5px;font-size:9.6px;color:#6d6d6d;font-weight:bold">VALUE</div>
<div class="t" style="left:1855px;top:181.5px;font-size:9.6px;color:#6d6d6d;font-weight:bold">PORT</div>
<svg class="a" style="left:1524px;top:119px" width="396" height="868" viewBox="1524 119 396 868">
<defs><linearGradient id="ic" x1="0" y1="0" x2="0" y2="1"><stop offset="0" stop-color="#e6f0f8"/><stop offset="1" stop-color="#f7eaa6"/></linearGradient>
<linearGradient id="evg" x1="0" y1="0" x2="0.3" y2="1"><stop offset="0" stop-color="#fbe03a"/><stop offset="0.5" stop-color="#f7b52a"/><stop offset="1" stop-color="#f08a2a"/></linearGradient>
<linearGradient id="stg" x1="0" y1="0" x2="0" y2="1"><stop offset="0" stop-color="#fbf4d8"/><stop offset="1" stop-color="#ecd27a"/></linearGradient></defs>
<circle cx="1889" cy="131.5" r="6" fill="none" stroke="#555" stroke-width="1"/><path d="M1885.5 129.5 h7 l-3.5 4.5 z" fill="#333"/>
<path d="M1905 127.5 l8.5 8.5 M1913.5 127.5 l-8.5 8.5" stroke="#444" stroke-width="1.3"/>
<rect x="1536.5" y="150.5" width="21.0" height="21" rx="4" fill="#f4f4f4" stroke="#9c9c9c" stroke-width="1"/>
<rect x="1560" y="150.5" width="21" height="21" rx="4" fill="#f4f4f4" stroke="#9c9c9c" stroke-width="1"/>
<rect x="1583.5" y="150.5" width="21.0" height="21" rx="4" fill="#f4f4f4" stroke="#9c9c9c" stroke-width="1"/>
<rect x="1608.5" y="150.5" width="21.0" height="21" rx="4" fill="#f4f4f4" stroke="#9c9c9c" stroke-width="1"/>
<rect x="1634" y="150.5" width="20.5" height="21" rx="4" fill="#f4f4f4" stroke="#9c9c9c" stroke-width="1"/>
<rect x="1657.5" y="150.5" width="36.5" height="21" rx="4" fill="#f4f4f4" stroke="#9c9c9c" stroke-width="1"/>
<rect x="1540" y="153" width="13" height="14" rx="1.5" fill="url(#ic)" stroke="#5b8fc2" stroke-width="1"/><path d="M1543 156v4 M1546 156v4 M1549 156v4" stroke="#567" stroke-width="0.8"/>
<path d="M1550.2 162.0 h3.6 v2.7 h2.7 v3.6 h-2.7 v2.7 h-3.6 v-2.7 h-2.7 v-3.6 h2.7 z" fill="#5cb83e" stroke="#3a8a2a" stroke-width="0.6"/>
<path d="M1567 152 l-3.5 7 h3 l-2 8 l6 -9 h-3 l3 -6 z" fill="url(#evg)" stroke="#e05a20" stroke-width="0.6"/>
<path d="M1574.2 162.0 h3.6 v2.7 h2.7 v3.6 h-2.7 v2.7 h-3.6 v-2.7 h-2.7 v-3.6 h2.7 z" fill="#5cb83e" stroke="#3a8a2a" stroke-width="0.6"/>
<rect x="1587.5" y="153.5" width="12" height="13" fill="#eef2f7" stroke="#8a9bb0" stroke-width="1"/><path d="M1589 156 h4" stroke="#3aa0e0" stroke-width="1.5"/><path d="M1589 159h8 M1589 161.5h8 M1589 164h6" stroke="#b8c2cc" stroke-width="0.8"/>
<path d="M1598.2 162.0 h3.6 v2.7 h2.7 v3.6 h-2.7 v2.7 h-3.6 v-2.7 h-2.7 v-3.6 h2.7 z" fill="#5cb83e" stroke="#3a8a2a" stroke-width="0.6"/>
<circle cx="1617" cy="159" r="5.5" fill="#ec8a86"/><path d="M1617 154 v5" stroke="#fff" stroke-width="1.2"/><path d="M1618 162 l6 6" stroke="#bbb" stroke-width="2.5"/><circle cx="1619" cy="161" r="2.6" fill="none" stroke="#bbb" stroke-width="1.4"/>
<rect x="1637" y="153" width="15" height="5" fill="#bfe0f7" stroke="#2d7fcf" stroke-width="1.3"/><path d="M1644.5 158v3 M1640 161h9 M1640 161v2 M1649 161v2" stroke="#2d7fcf" stroke-width="1"/><rect x="1637" y="164" width="6" height="4" fill="#bfe0f7" stroke="#2d7fcf" stroke-width="1.2"/><rect x="1646" y="164" width="6" height="4" fill="#bfe0f7" stroke="#2d7fcf" stroke-width="1.2"/>
<circle cx="1666" cy="159" r="5.2" fill="none" stroke="#5a5a5a" stroke-width="1.8" stroke-dasharray="1.7 1.4"/><circle cx="1666" cy="159" r="3.6" fill="#bdbdbd" stroke="#5a5a5a" stroke-width="1.4"/><circle cx="1666" cy="159" r="1.5" fill="#eee"/><circle cx="1671" cy="164.5" r="4.2" fill="none" stroke="#505050" stroke-width="1.6" stroke-dasharray="1.4 1.2"/><circle cx="1671" cy="164.5" r="3" fill="#9c9c9c" stroke="#4a4a4a" stroke-width="1.2"/><circle cx="1671" cy="164.5" r="1.1" fill="#ddd"/>
<path d="M1682 158.5 h7 l-3.5 3.5 z" fill="#444"/>
<path d="M1702 153 h11 l-4 6 v8 l-3 -2 v-6 z" fill="#c8c8c8" stroke="#888" stroke-width="0.8"/>
<path d="M1582.5 179 V470 M1800.5 179 V470 M1850.5 179 V470 M1901.5 179 V470" stroke="#dedede" stroke-width="1"/>
<rect x="1901" y="179" width="17" height="20" fill="#ededed"/><line x1="1531" y1="227.5" x2="1901" y2="227.5" stroke="#e4e4e4" stroke-width="1"/><line x1="1531" y1="254.5" x2="1901" y2="254.5" stroke="#e4e4e4" stroke-width="1"/><line x1="1531" y1="281.5" x2="1901" y2="281.5" stroke="#e4e4e4" stroke-width="1"/><line x1="1531" y1="309.5" x2="1901" y2="309.5" stroke="#e4e4e4" stroke-width="1"/><line x1="1531" y1="336.5" x2="1901" y2="336.5" stroke="#e4e4e4" stroke-width="1"/><line x1="1531" y1="363.5" x2="1901" y2="363.5" stroke="#e4e4e4" stroke-width="1"/><line x1="1531" y1="391.5" x2="1901" y2="391.5" stroke="#e4e4e4" stroke-width="1"/><line x1="1531" y1="418.5" x2="1901" y2="418.5" stroke="#e4e4e4" stroke-width="1"/><line x1="1531" y1="446.5" x2="1901" y2="446.5" stroke="#e4e4e4" stroke-width="1"/><line x1="1531" y1="469.5" x2="1901" y2="469.5" stroke="#e4e4e4" stroke-width="1"/>
<path d="M1594.5 368.12 l8 14 h-16 z" fill="#f5c518" stroke="#e6b000" stroke-width="0.8" stroke-linejoin="round"/><rect x="1594" y="372.62" width="1.4" height="5" fill="#fff"/><rect x="1594" y="378.62" width="1.4" height="1.4" fill="#fff"/>
<path d="M1557.5 397.78 h6.6 l-1.2 4 h2.2 l-1.2 3.8 h2.2 l-5.6 7.4 l1 -5 h-3 l0.6 -3.4 h-2.6 z" fill="url(#evg)" stroke="#e0553c" stroke-width="1" stroke-linejoin="round"/>
<path d="M1557.5 425.02 h6.6 l-1.2 4 h2.2 l-1.2 3.8 h2.2 l-5.6 7.4 l1 -5 h-3 l0.6 -3.4 h-2.6 z" fill="url(#evg)" stroke="#e0553c" stroke-width="1" stroke-linejoin="round"/>
<rect x="1551.5" y="452.88" width="15" height="10" rx="2.5" fill="url(#stg)" stroke="#555" stroke-width="1"/>
<defs><linearGradient id="ic2" x1="0" y1="0" x2="1" y2="1"><stop offset="0" stop-color="#f2f7fc"/><stop offset="0.45" stop-color="#f6f3d8"/><stop offset="1" stop-color="#f8e8a0"/></linearGradient></defs>
<rect x="1553.5" y="206.30" width="14.5" height="14" rx="3" fill="url(#ic2)" stroke="#7ea6cf" stroke-width="1.2"/>
<path d="M1557.5 208.80v9 M1560.75 208.80v9 M1564 208.80v9" stroke="#6c8cb0" stroke-width="0.9"/>
<circle cx="1560.75" cy="211.10" r="1.2" fill="#f4f4ea" stroke="#6c8cb0" stroke-width="0.8"/><circle cx="1557.5" cy="215.60" r="1.2" fill="#f4f4ea" stroke="#6c8cb0" stroke-width="0.8"/><circle cx="1564" cy="215.60" r="1.2" fill="#f4f4ea" stroke="#6c8cb0" stroke-width="0.8"/>
<path d="M1552.5 215.30 h3.8 v-2 l3.6 3 l-3.6 3 v-2 h-3.8 z" fill="#e8e8e8" stroke="#505050" stroke-width="1" stroke-linejoin="round"/>
<rect x="1553.5" y="233.75" width="14.5" height="14" rx="3" fill="url(#ic2)" stroke="#7ea6cf" stroke-width="1.2"/>
<path d="M1557.5 236.25v9 M1560.75 236.25v9 M1564 236.25v9" stroke="#6c8cb0" stroke-width="0.9"/>
<circle cx="1560.75" cy="238.55" r="1.2" fill="#f4f4ea" stroke="#6c8cb0" stroke-width="0.8"/><circle cx="1557.5" cy="243.05" r="1.2" fill="#f4f4ea" stroke="#6c8cb0" stroke-width="0.8"/><circle cx="1564" cy="243.05" r="1.2" fill="#f4f4ea" stroke="#6c8cb0" stroke-width="0.8"/>
<path d="M1561.0 243.25 h3.8 v-2 l3.6 3 l-3.6 3 v-2 h-3.8 z" fill="#e8e8e8" stroke="#505050" stroke-width="1" stroke-linejoin="round"/>
<rect x="1553.5" y="261.00" width="14.5" height="14" rx="3" fill="url(#ic2)" stroke="#7ea6cf" stroke-width="1.2"/>
<path d="M1557.5 263.50v9 M1560.75 263.50v9 M1564 263.50v9" stroke="#6c8cb0" stroke-width="0.9"/>
<circle cx="1560.75" cy="265.80" r="1.2" fill="#f4f4ea" stroke="#6c8cb0" stroke-width="0.8"/><circle cx="1557.5" cy="270.30" r="1.2" fill="#f4f4ea" stroke="#6c8cb0" stroke-width="0.8"/><circle cx="1564" cy="270.30" r="1.2" fill="#f4f4ea" stroke="#6c8cb0" stroke-width="0.8"/>
<rect x="1553.5" y="288.45" width="14.5" height="14" rx="3" fill="url(#ic2)" stroke="#7ea6cf" stroke-width="1.2"/>
<path d="M1557.5 290.95v9 M1560.75 290.95v9 M1564 290.95v9" stroke="#6c8cb0" stroke-width="0.9"/>
<circle cx="1560.75" cy="293.25" r="1.2" fill="#f4f4ea" stroke="#6c8cb0" stroke-width="0.8"/><circle cx="1557.5" cy="297.75" r="1.2" fill="#f4f4ea" stroke="#6c8cb0" stroke-width="0.8"/><circle cx="1564" cy="297.75" r="1.2" fill="#f4f4ea" stroke="#6c8cb0" stroke-width="0.8"/>
<path d="M1552.5 297.45 h3.8 v-2 l3.6 3 l-3.6 3 v-2 h-3.8 z" fill="#e8e8e8" stroke="#505050" stroke-width="1" stroke-linejoin="round"/>
<rect x="1553.5" y="315.75" width="14.5" height="14" rx="3" fill="url(#ic2)" stroke="#7ea6cf" stroke-width="1.2"/>
<path d="M1557.5 318.25v9 M1560.75 318.25v9 M1564 318.25v9" stroke="#6c8cb0" stroke-width="0.9"/>
<circle cx="1560.75" cy="320.55" r="1.2" fill="#f4f4ea" stroke="#6c8cb0" stroke-width="0.8"/><circle cx="1557.5" cy="325.05" r="1.2" fill="#f4f4ea" stroke="#6c8cb0" stroke-width="0.8"/><circle cx="1564" cy="325.05" r="1.2" fill="#f4f4ea" stroke="#6c8cb0" stroke-width="0.8"/>
<rect x="1553.5" y="343.10" width="14.5" height="14" rx="3" fill="url(#ic2)" stroke="#7ea6cf" stroke-width="1.2"/>
<path d="M1557.5 345.60v9 M1560.75 345.60v9 M1564 345.60v9" stroke="#6c8cb0" stroke-width="0.9"/>
<circle cx="1560.75" cy="347.90" r="1.2" fill="#f4f4ea" stroke="#6c8cb0" stroke-width="0.8"/><circle cx="1557.5" cy="352.40" r="1.2" fill="#f4f4ea" stroke="#6c8cb0" stroke-width="0.8"/><circle cx="1564" cy="352.40" r="1.2" fill="#f4f4ea" stroke="#6c8cb0" stroke-width="0.8"/>
<rect x="1553.5" y="370.60" width="14.5" height="14" rx="3" fill="url(#ic2)" stroke="#7ea6cf" stroke-width="1.2"/>
<path d="M1557.5 373.10v9 M1560.75 373.10v9 M1564 373.10v9" stroke="#6c8cb0" stroke-width="0.9"/>
<circle cx="1560.75" cy="375.40" r="1.2" fill="#f4f4ea" stroke="#6c8cb0" stroke-width="0.8"/><circle cx="1557.5" cy="379.90" r="1.2" fill="#f4f4ea" stroke="#6c8cb0" stroke-width="0.8"/><circle cx="1564" cy="379.90" r="1.2" fill="#f4f4ea" stroke="#6c8cb0" stroke-width="0.8"/>
<path d="M1552.5 379.60 h3.8 v-2 l3.6 3 l-3.6 3 v-2 h-3.8 z" fill="#e8e8e8" stroke="#505050" stroke-width="1" stroke-linejoin="round"/>
</svg>
<div class="t" style="left:1590px;top:205.00px;font-size:13px;color:#222">isCharging</div>
<div class="t" style="left:1859px;top:204.00px;font-size:13px;color:#222">1</div>
<div class="t" style="left:1590px;top:232.25px;font-size:13px;color:#222">sentPower</div>
<div class="t" style="left:1859px;top:231.25px;font-size:13px;color:#222">1</div>
<div class="t" style="left:1590px;top:259.50px;font-size:13px;color:#222">mainCharge</div>
<div class="t" style="left:1808px;top:259.50px;font-size:13px;color:#222">0</div>
<div class="t" style="left:1590px;top:286.75px;font-size:13px;color:#222">deviceDemand</div>
<div class="t" style="left:1859px;top:285.75px;font-size:13px;color:#222">2</div>
<div class="t" style="left:1590px;top:314.00px;font-size:13px;color:#222">maxPower</div>
<div class="t" style="left:1808px;top:314.00px;font-size:13px;color:#222">3.5</div>
<div class="t" style="left:1590px;top:341.25px;font-size:13px;color:#222">emergencyCharge</div>
<div class="t" style="left:1808px;top:341.25px;font-size:13px;color:#222">100</div>
<div class="t" style="left:1611px;top:368.50px;font-size:13px;color:#222">receivedPower</div>
<div class="t" style="left:1859px;top:367.50px;font-size:13px;color:#222">3</div>
<div class="t" style="left:1590px;top:395.75px;font-size:13px;color:#222">toggleOff</div>
<div class="t" style="left:1590px;top:423.00px;font-size:13px;color:#222">toggleOn</div>
<div class="t" style="left:1590px;top:450.25px;font-size:13px;color:#222">EmergencyBattery</div>
<div id="status" class="a">
  <div class="t" style="left:4px;top:7px;font-size:11px;color:#222">Ready</div>
  <div class="t" style="left:973px;top:6px;font-size:12px;color:#222">134%</div>
  <div class="t" style="left:1826px;top:6px;font-size:11.6px;color:#2b2b8f">VariableStepAuto</div>
</div>
</body></html>
